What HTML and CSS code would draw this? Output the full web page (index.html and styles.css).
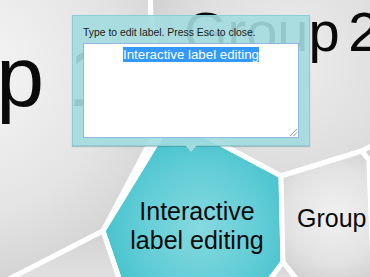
FILE: index.html
```html
<!DOCTYPE html>
<html lang="en">
  <head>
    <meta charset="UTF-8" />
    <meta name="viewport" content="width=device-width, initial-scale=1.0" />
    <title>Label editing</title>
    <link rel="stylesheet" href="styles.css">
  </head>

  <body>
    <div class="stage">
      <svg class="map" width="370" height="277" viewBox="0 0 370 277">
        <defs>
          <radialGradient id="g-left" gradientUnits="userSpaceOnUse" cx="-30" cy="70" r="260">
            <stop offset="0" stop-color="#f6f6f6" />
            <stop offset="0.55" stop-color="#e4e4e4" />
            <stop offset="1" stop-color="#c9c9c9" />
          </radialGradient>
          <radialGradient id="g-top" gradientUnits="userSpaceOnUse" cx="290" cy="60" r="190">
            <stop offset="0" stop-color="#ededed" />
            <stop offset="0.55" stop-color="#dedede" />
            <stop offset="1" stop-color="#c6c6c6" />
          </radialGradient>
          <radialGradient id="g-right" gradientUnits="userSpaceOnUse" cx="335" cy="215" r="80">
            <stop offset="0" stop-color="#f1f1f1" />
            <stop offset="0.6" stop-color="#e2e2e2" />
            <stop offset="1" stop-color="#cbcbcb" />
          </radialGradient>
          <radialGradient id="g-teal" gradientUnits="userSpaceOnUse" cx="200" cy="228" r="110">
            <stop offset="0" stop-color="#86d9df" />
            <stop offset="0.55" stop-color="#62cdd6" />
            <stop offset="1" stop-color="#3dbfca" />
          </radialGradient>
          <linearGradient id="g-low" x1="0" y1="0" x2="0" y2="1">
            <stop offset="0" stop-color="#d2d2d2" />
            <stop offset="1" stop-color="#e6e6e6" />
          </linearGradient>
        </defs>

        <g class="cells">
          <polygon points="-20,-20 150,-20 151,18 168,108 103,231 -20,294" fill="url(#g-left)" />
          <polygon points="150,-20 390,-20 390,136 362,151 281,176 172,118 168,108 151,18" fill="url(#g-top)" />
          <polygon points="172,118 281,176 283,262 262,290 123,290 103,231" fill="url(#g-teal)" />
          <polygon points="281,176 362,151 369,160 374,290 305,290 283,262" fill="url(#g-right)" />
          <polygon points="362,151 390,136 390,290 374,290 369,160" fill="url(#g-right)" />
          <polygon points="-20,294 103,231 123,290" fill="url(#g-low)" />
          <polygon points="262,290 283,262 305,290" fill="url(#g-low)" />
        </g>

        <g class="labels">
          <text x="-195" y="106" class="label-big">Group 1</text>
          <text x="184" y="51" class="label-mid">Group <tspan dx="-7">2</tspan></text>
          <text x="197" y="220" class="label-small" text-anchor="middle">Interactive</text>
          <text x="197" y="249" class="label-small" text-anchor="middle">label editing</text>
          <text x="297" y="227" class="label-small">Group</text>
        </g>
      </svg>

      <div class="editor">
        <p class="editor-hint">Type to edit label. Press Esc to close.</p>
        <div class="editor-field">
          <span class="editor-selected">Interactive label editing</span>
          <svg class="editor-grip" width="9" height="9" viewBox="0 0 9 9">
            <path d="M1 8 L8 1 M4.5 8 L8 4.5" />
          </svg>
        </div>
      </div>
    </div>
  </body>
</html>
```

FILE: styles.css
```css
body {
  margin: 0;
  background: #ffffff;
}

.stage {
  position: relative;
  width: 370px;
  height: 277px;
  overflow: hidden;
}

.map {
  display: block;
}

.cells polygon {
  stroke: #ffffff;
  stroke-width: 5;
  stroke-linejoin: round;
}

.labels text {
  font-family: "Liberation Sans", Arial, sans-serif;
  fill: #0a0a0a;
}

.label-big {
  font-size: 86px;
}

.label-mid {
  font-size: 56px;
}

.label-small {
  font-size: 25px;
}

.editor {
  position: absolute;
  left: 72px;
  top: 15px;
  width: 238px;
  height: 131px;
  box-sizing: border-box;
  padding: 11px 10px 0 10px;
  background-color: rgba(163, 219, 223, 0.9);
  border: 1px solid #8ccdd2;
  box-shadow: 0 1px 1px rgba(60, 120, 125, 0.35);
  font-family: "Liberation Sans", Arial, sans-serif;
}

.editor::after {
  content: "";
  position: absolute;
  left: 112px;
  bottom: -7px;
  border-left: 6px solid transparent;
  border-right: 6px solid transparent;
  border-top: 7px solid #a6dadd;
}

.editor-hint {
  margin: 0 0 4px 0;
  font-size: 10.4px;
  line-height: 12px;
  color: #1a1a1a;
  white-space: nowrap;
}

.editor-field {
  position: relative;
  height: 95px;
  box-sizing: border-box;
  padding: 3px 4px;
  background-color: #ffffff;
  border: 1px solid #8db6e2;
  text-align: center;
  font-size: 13.3px;
  line-height: 15px;
}

.editor-selected {
  background-color: #3399ff;
  color: #ffffff;
}

.editor-grip {
  position: absolute;
  right: 0;
  bottom: 0;
}

.editor-grip path {
  stroke: #9a9a9a;
  stroke-width: 1;
  fill: none;
}
```
